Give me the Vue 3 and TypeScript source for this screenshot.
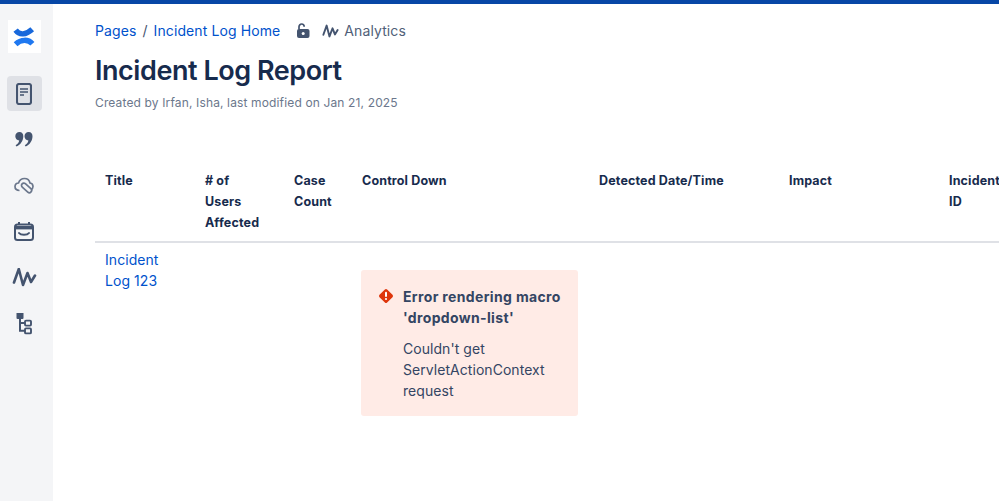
<script setup lang="ts">
interface Col { label: string; width: number }
const cols: Col[] = [
  { label: 'Title', width: 100 },
  { label: '# of Users Affected', width: 89 },
  { label: 'Case Count', width: 68 },
  { label: 'Control Down', width: 237 },
  { label: 'Detected Date/Time', width: 190 },
  { label: 'Impact', width: 160 },
  { label: 'Incident ID', width: 85 },
]
</script>

<template>
  <div class="page">
    <div class="topbar"></div>
    <div class="body">
      <aside class="rail">
        <div class="logo">
          <svg width="22" height="22" viewBox="0 0 22 22" fill="none" stroke-width="5.4">
            <path d="M2.6 4.2C6.4 9.4 13 9 19.2 3.2" stroke="#1868db"/>
            <path d="M2.6 18.2C8 13 15.4 13.2 19.4 17.8" stroke="#1f78f0"/>
          </svg>
        </div>
        <div class="rail-btn active">
          <svg width="16" height="22" viewBox="0 0 16 22" fill="none">
            <rect x="1" y="1" width="14" height="20" rx="2" stroke="#44546f" stroke-width="2.1"/>
            <path d="M4 6h8M4 9h8M4 12h4" stroke="#44546f" stroke-width="1.6"/>
          </svg>
        </div>
        <div class="rail-btn">
          <svg width="18" height="15" viewBox="0 0 18 15" fill="#44546f">
            <path d="M4.5 0C7 0 8.3 1.8 8.3 4.2 8.3 8.5 5.6 12.7 1.5 14.6L.6 13.3C2.6 12 3.9 10.4 4.2 8.4 1.9 8.4 .3 6.6 .3 4.3 .3 1.9 2 0 4.5 0Z"/>
            <path d="M13.7 0C16.2 0 17.5 1.8 17.5 4.2 17.5 8.5 14.8 12.7 10.7 14.6L9.8 13.3C11.8 12 13.1 10.4 13.4 8.4 11.1 8.4 9.5 6.6 9.5 4.3 9.5 1.9 11.2 0 13.7 0Z"/>
          </svg>
        </div>
        <div class="rail-btn">
          <svg width="20" height="18" viewBox="0 0 20 18" fill="none" stroke="#6b778c" stroke-width="1.7">
            <path d="M5.5 13.5C3 13.5 1 12.2 1 9.6 1 7.4 2.6 6 4.5 6 5.5 3 8 1.5 10.5 1.5 13.5 1.5 15.5 3.5 16 6 18 6.3 19 8 19 9.5 19 11 18.2 12 17 12.7"/>
            <rect x="6.5" y="8.6" width="12" height="4.6" rx="2.3" transform="rotate(42 12.5 11)" fill="#f4f5f7"/>
          </svg>
        </div>
        <div class="rail-btn">
          <svg width="20" height="19" viewBox="0 0 20 19" fill="none">
            <rect x="1" y="2.6" width="18" height="15.4" rx="2.5" stroke="#44546f" stroke-width="2"/>
            <path d="M1 4h18v3.4H1z" fill="#44546f"/>
            <path d="M5 0v3M15 0v3" stroke="#44546f" stroke-width="2"/>
            <path d="M5 11c1.8 2.4 8.2 2.4 10 0" stroke="#44546f" stroke-width="2" stroke-linecap="round"/>
          </svg>
        </div>
        <div class="rail-btn">
          <svg width="25" height="20" viewBox="0 1 25 20" fill="none" stroke="#44546f" stroke-width="2.6" stroke-linecap="round" stroke-linejoin="round">
            <path d="M2 15.5 6.8 2 11 18 15.5 6 19 15 23 8.5"/>
          </svg>
        </div>
        <div class="rail-btn">
          <svg width="16" height="22" viewBox="0 1 16 22" fill="none">
            <rect x=".5" y="0" width="7" height="7" rx="1" fill="#44546f"/>
            <path d="M4 6v12.8h5M4 11h5" stroke="#44546f" stroke-width="2"/>
            <rect x="9" y="8.6" width="6" height="5" rx="1" stroke="#44546f" stroke-width="1.9"/>
            <rect x="9" y="16.4" width="6" height="5" rx="1" stroke="#44546f" stroke-width="1.9"/>
          </svg>
        </div>
      </aside>

      <main class="content">
        <nav class="crumbs">
          <a class="link">Pages</a>
          <span class="sep">/</span>
          <a class="link">Incident Log Home</a>
          <svg class="lock" width="14" height="16" viewBox="0 0 14 16" fill="none">
            <path d="M3 6.5V3.8C3 2.2 4.2 1 5.6 1S8.2 2.2 8.2 3.8" stroke="#44546f" stroke-width="1.7"/>
            <rect x="1" y="6" width="12.5" height="9" rx="2" fill="#44546f"/>
            <circle cx="7.2" cy="10.5" r="1.5" fill="#fff"/>
          </svg>
          <svg class="wave" width="17" height="14" viewBox="0 0 25 20" fill="none" stroke="#44546f" stroke-width="2.8" stroke-linecap="round" stroke-linejoin="round">
            <path d="M2 15.5 6.8 2 11 18 15.5 6 19 15 23 8.5"/>
          </svg>
          <span class="analytics">Analytics</span>
        </nav>
        <h1 class="title">Incident Log Report</h1>
        <p class="byline">Created by Irfan, Isha, last modified on Jan 21, 2025</p>

        <div class="table">
          <div class="thead">
            <div v-for="c in cols" :key="c.label" class="th" :style="{ width: c.width + 'px' }">{{ c.label }}</div>
          </div>
          <div class="row">
            <div class="td first"><a class="link">Incident Log 123</a></div>
            <div class="td second">
              <div class="error">
                <svg class="err-icon" width="16" height="16" viewBox="0 0 16 16">
                  <rect x="2.6" y="2.6" width="10.8" height="10.8" rx="1.6" transform="rotate(45 8 8)" fill="#de350b"/>
                  <rect x="7" y="3.8" width="2" height="5.2" rx="1" fill="#fff"/>
                  <circle cx="8" cy="11" r="1.1" fill="#fff"/>
                </svg>
                <div>
                  <div class="err-title">Error rendering macro 'dropdown-list'</div>
                  <div class="err-msg">Couldn't get ServletActionContext request</div>
                </div>
              </div>
            </div>
          </div>
        </div>
      </main>
    </div>
  </div>
</template>

<style>
html, body { margin: 0; background: #fff; overflow: hidden; }
</style>

<style scoped>
.page {
  width: 999px;
  height: 501px;
  overflow: hidden;
  font-family: Inter, "Liberation Sans", sans-serif;
  color: #172b4d;
  display: flex;
  flex-direction: column;
}
.topbar { height: 4px; background: #0747a6; flex: none; }
.body { flex: 1; display: flex; min-height: 0; }
.rail {
  width: 53px;
  flex: none;
  background: #f4f5f7;
  display: flex;
  flex-direction: column;
  align-items: center;
  padding: 16px 5px 0 0;
  box-sizing: border-box;
}
.logo {
  width: 33px;
  height: 33px;
  background: #fff;
  display: flex;
  align-items: center;
  justify-content: center;
  margin-bottom: 23px;
}
.rail-btn {
  width: 35px;
  height: 35px;
  margin-bottom: 11px;
  display: flex;
  align-items: center;
  justify-content: center;
  border-radius: 4px;
}
.rail-btn.active { background: #dfe1e6; }
.content { flex: 1; min-width: 0; padding: 17px 0 0 42px; }
.crumbs {
  display: flex;
  align-items: center;
  height: 20px;
  font-size: 14px;
  line-height: 20px;
  letter-spacing: 0.1px;
}
.link { color: #0052cc; }
.sep { margin: 0 6px; color: #44546f; }
.lock { margin-left: 16px; }
.wave { margin-left: 12px; }
.analytics { margin-left: 5px; color: #505f79; }
.title {
  margin: 12px 0 0;
  font-size: 27px;
  line-height: 36px;
  font-weight: 600;
  letter-spacing: -0.45px;
  color: #172b4d;
}
.byline {
  margin: 6px 0 0;
  font-size: 12px;
  line-height: 16px;
  letter-spacing: 0.14px;
  color: #6b778c;
}
.table { margin-top: 59px; width: 943px; }
.thead {
  display: flex;
  border-bottom: 2px solid #dfe1e6;
  padding-bottom: 8px;
}
.th {
  flex: none;
  box-sizing: border-box;
  padding: 0 10px;
  font-size: 12.5px;
  line-height: 21px;
  font-weight: 700;
  letter-spacing: 0.15px;
}
.th:nth-child(2) { padding-right: 20px; }
.th:nth-child(3) { padding-right: 20px; }
.row { display: flex; }
.td { flex: none; box-sizing: border-box; }
.first { width: 256px; padding: 6px 0 0 10px; font-size: 14px; line-height: 21px; letter-spacing: 0.06px; }
.first .link { display: block; width: 60px; }
.second { padding: 27px 0 0 10px; }
.error {
  width: 217px;
  height: 146px;
  box-sizing: border-box;
  background: #ffebe6;
  border-radius: 3px;
  padding: 16px 16px 0 17px;
  display: flex;
  gap: 9px;
  font-size: 14px;
  line-height: 21px;
  color: #344563;
}
.err-icon { flex: none; margin-top: 2px; }
.err-title { font-weight: 700; letter-spacing: 0.35px; margin-right: -6px; }
.err-msg { margin-top: 10px; letter-spacing: 0.05px; }
</style>
